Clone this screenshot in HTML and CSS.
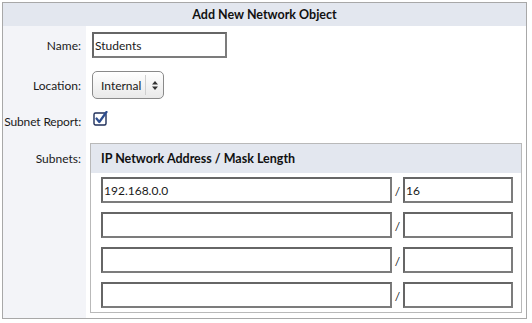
FILE: index.html
```html
<!DOCTYPE html>
<html>
<head>
<meta charset="utf-8">
<link rel="stylesheet" href="styles.css">
</head>
<body>
<div class="panel">
  <div class="title">Add New Network Object</div>
  <div class="form">
    <div class="lbl row-name">Name:</div>
    <div class="val row-name"><input class="txt name" type="text" value="Students"></div>

    <div class="lbl row-loc">Location:</div>
    <div class="val row-loc">
      <div class="select">
        <span class="sel-text">Internal</span>
        <span class="sel-arrows">
          <svg width="6" height="9" viewBox="0 0 6 9"><path d="M3 0 L6 3.5 H0 Z M3 9 L0 5.5 H6 Z" fill="#333"/></svg>
        </span>
      </div>
    </div>

    <div class="lbl row-chk">Subnet Report:</div>
    <div class="val row-chk">
      <svg class="chk" width="15" height="15" viewBox="0 0 15 15">
        <rect x="1" y="2" width="12" height="12" rx="1.5" fill="#fff" stroke="#1f2f5a" stroke-width="1.4"/>
        <path d="M3.5 7.5 L6.3 11 L13.5 1" fill="none" stroke="#2c4d8f" stroke-width="2.2" stroke-linecap="round" stroke-linejoin="round"/>
      </svg>
    </div>

    <div class="lbl row-sub">Subnets:</div>
    <div class="val row-sub">
      <div class="subtable">
        <div class="subhead">IP Network Address / Mask Length</div>
        <div class="subrows">
          <div class="subrow"><input class="txt addr" type="text" value="192.168.0.0"><span class="slash">/</span><input class="txt mask" type="text" value="16"></div>
          <div class="subrow"><input class="txt addr" type="text" value=""><span class="slash">/</span><input class="txt mask" type="text" value=""></div>
          <div class="subrow"><input class="txt addr" type="text" value=""><span class="slash">/</span><input class="txt mask" type="text" value=""></div>
          <div class="subrow"><input class="txt addr" type="text" value=""><span class="slash">/</span><input class="txt mask" type="text" value=""></div>
        </div>
      </div>
    </div>
  </div>
</div>
</body>
</html>
```
FILE: styles.css
```css
* { box-sizing: border-box; }
html, body { margin: 0; padding: 0; background: #fff; }
body {
  font-family: Lato, "Liberation Sans", sans-serif;
  font-size: 12px;
  color: #1a1a1a;
}
.panel {
  margin: 2px 0 0 2px;
  width: 525px;
  height: 317px;
  border: 1px solid #a8a8a8;
  display: flex;
  flex-direction: column;
}
.title {
  height: 23px;
  background: #e3e7ef;
  text-align: center;
  font-weight: bold;
  font-size: 12.5px;
  line-height: 23px;
  color: #111;
}
.form {
  flex: 1;
  display: grid;
  grid-template-columns: 83px 1fr;
  grid-template-rows: 38px 42px 31px 1fr;
}
.lbl {
  background: #f3f4f8;
  white-space: nowrap;
  padding-right: 5px;
  display: flex;
  align-items: center;
  justify-content: flex-end;
  color: #1a1a1a;
}
.val {
  display: flex;
  align-items: center;
  padding-left: 6px;
}
.lbl.row-chk { align-items: flex-start; padding-top: 8px; letter-spacing: -0.15px; }
.val.row-chk { align-items: flex-start; padding-top: 5px; padding-left: 6px; }
.lbl.row-sub { align-items: flex-start; padding-top: 14px; }
.val.row-sub { align-items: flex-start; padding: 6px 3px 5px 4px; }

.txt {
  font-family: Lato, "Liberation Sans", sans-serif;
  font-size: 12px;
  color: #1a1a1a;
  height: 26px;
  border: 2px solid #747474;
  border-color: #666 #7c7c7c #7c7c7c #666;
  padding: 0 1px;
  margin: 0;
  background: #fff;
  outline: none;
}
.name { width: 135px; }

.select {
  width: 72px;
  height: 28px;
  border: 1px solid #8a8a8a;
  border-radius: 5px;
  background: linear-gradient(#ffffff, #e9e9e9);
  display: flex;
  align-items: center;
  box-shadow: inset 0 1px 0 #fff;
}
.sel-text {
  flex: 1;
  padding-left: 8px;
  color: #1a1a1a;
}
.sel-arrows {
  width: 18px;
  height: 20px;
  border-left: 1px solid #cfcfcf;
  display: flex;
  align-items: center;
  justify-content: center;
}
.chk { display: block; margin-left: 1px; }

.subtable {
  width: 432px;
  height: 170px;
  border: 1px solid #b9b9b9;
  display: flex;
  flex-direction: column;
}
.subhead {
  height: 29px;
  background: #e3e7ef;
  font-weight: bold;
  font-size: 12.5px;
  line-height: 29px;
  padding-left: 10px;
  color: #111;
}
.subrows {
  display: flex;
  flex-direction: column;
  gap: 9px;
  padding: 4px 0 0 10px;
}
.subrow {
  display: grid;
  grid-template-columns: 291px 11px 110px;
  align-items: center;
}
.addr, .mask { width: 100%; }
.slash {
  text-align: center;
  color: #1a1a1a;
  padding-top: 3px;
}
```
